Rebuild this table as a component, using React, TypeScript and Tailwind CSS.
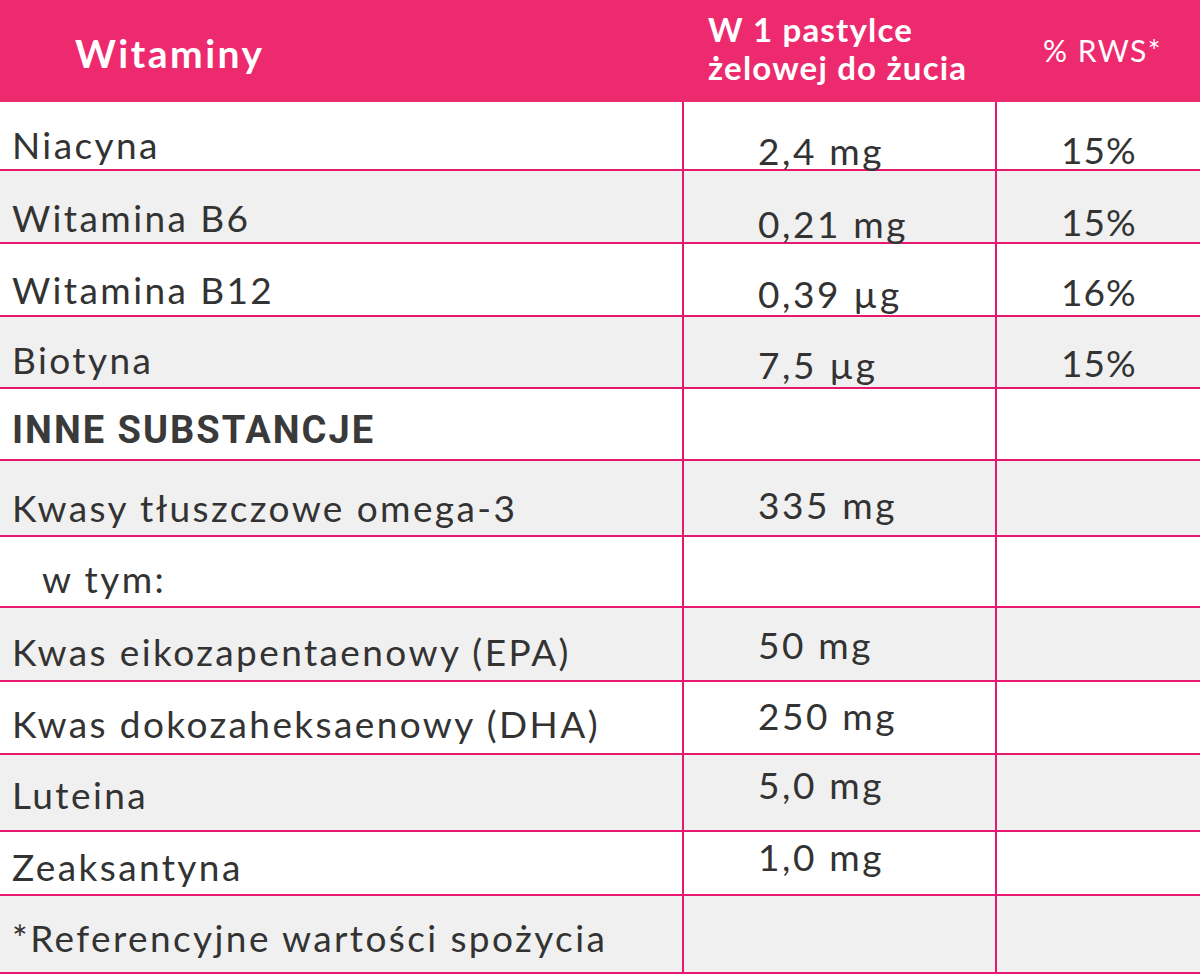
import React from 'react';

type Row = {
  name: string;
  amount?: string;
  rws?: string;
  h: string;
  bg: string;
  pb1: string;
  pb2: string;
  pb3: string;
  kind?: 'section' | 'indent';
};

const rows: Row[] = [
  { name: 'Niacyna', amount: '2,4 mg', rws: '15%', h: 'h-[69px]', bg: 'bg-white', pb1: 'pb-[6px]', pb2: 'pb-0', pb3: 'pb-[1px]' },
  { name: 'Witamina B6', amount: '0,21 mg', rws: '15%', h: 'h-[73px]', bg: 'bg-[#f0f0f0]', pb1: 'pb-[6px]', pb2: 'pb-0', pb3: 'pb-[2px]' },
  { name: 'Witamina B12', amount: '0,39 µg', rws: '16%', h: 'h-[73px]', bg: 'bg-white', pb1: 'pb-[7px]', pb2: 'pb-[3px]', pb3: 'pb-[5px]' },
  { name: 'Biotyna', amount: '7,5 µg', rws: '15%', h: 'h-[72px]', bg: 'bg-[#f0f0f0]', pb1: 'pb-[9px]', pb2: 'pb-[4px]', pb3: 'pb-[6px]' },
  { name: 'INNE SUBSTANCJE', h: 'h-[72px]', bg: 'bg-white', pb1: 'pb-[10px]', pb2: 'pb-0', pb3: 'pb-0', kind: 'section' },
  { name: 'Kwasy tłuszczowe omega-3', amount: '335 mg', h: 'h-[76px]', bg: 'bg-[#f0f0f0]', pb1: 'pb-[9px]', pb2: 'pb-[12px]', pb3: 'pb-0' },
  { name: 'w tym:', h: 'h-[71px]', bg: 'bg-white', pb1: 'pb-[9px]', pb2: 'pb-0', pb3: 'pb-0', kind: 'indent' },
  { name: 'Kwas eikozapentaenowy (EPA)', amount: '50 mg', h: 'h-[74px]', bg: 'bg-[#f0f0f0]', pb1: 'pb-[10px]', pb2: 'pb-[17px]', pb3: 'pb-0' },
  { name: 'Kwas dokozaheksaenowy (DHA)', amount: '250 mg', h: 'h-[73px]', bg: 'bg-white', pb1: 'pb-[11px]', pb2: 'pb-[19px]', pb3: 'pb-0' },
  { name: 'Luteina', amount: '5,0 mg', h: 'h-[77px]', bg: 'bg-[#f0f0f0]', pb1: 'pb-[17px]', pb2: 'pb-[27px]', pb3: 'pb-0' },
  { name: 'Zeaksantyna', amount: '1,0 mg', h: 'h-[64px]', bg: 'bg-white', pb1: 'pb-[9px]', pb2: 'pb-[19px]', pb3: 'pb-0' },
  { name: '*Referencyjne wartości spożycia', h: 'h-[78px]', bg: 'bg-[#f0f0f0]', pb1: 'pb-[16px]', pb2: 'pb-0', pb3: 'pb-0' },
];

const cell = 'flex items-end leading-none whitespace-nowrap border-b-2 border-[#e6186f]';

export default function App() {
  return (
    <div className="w-[1200px] h-[976px] bg-white overflow-hidden text-[#333333] font-['Lato',sans-serif]">
      <div className="grid grid-cols-[684px_313px_203px] h-[102px] bg-[#ee2a6f] text-white">
        <div className="flex items-center pl-[75px] pt-[4px] text-[39px] font-bold tracking-[2.5px]">Witaminy</div>
        <div className="flex flex-col justify-center pl-[24px] pb-[6px] text-[33px] font-bold leading-[38px] tracking-[1.2px]">
          <span>W 1 pastylce</span>
          <span>żelowej do żucia</span>
        </div>
        <div className="flex items-center pl-[46px] pb-[2px] text-[30px] tracking-[1.5px]">% RWS*</div>
      </div>

      {rows.map((r) => (
        <div key={r.name} className={`grid grid-cols-[684px_313px_203px] ${r.h} ${r.bg}`}>
          <div
            className={`${cell} border-r-2 ${r.pb1} ${
              r.kind === 'section'
                ? "pl-[12px] font-['Roboto',sans-serif] font-bold text-[38px] tracking-[2px] text-[#3a3a3a]"
                : r.kind === 'indent'
                ? 'pl-[42px] text-[37px] tracking-[2.4px]'
                : 'pl-[12px] text-[37px] tracking-[2.4px]'
            }`}
          >
            {r.name}
          </div>
          <div className={`${cell} border-r-2 pl-[74px] text-[37px] tracking-[2.6px] ${r.pb2}`}>{r.amount}</div>
          <div className={`${cell} pl-[64px] text-[37px] tracking-[1px] ${r.pb3}`}>{r.rws}</div>
        </div>
      ))}
    </div>
  );
}
